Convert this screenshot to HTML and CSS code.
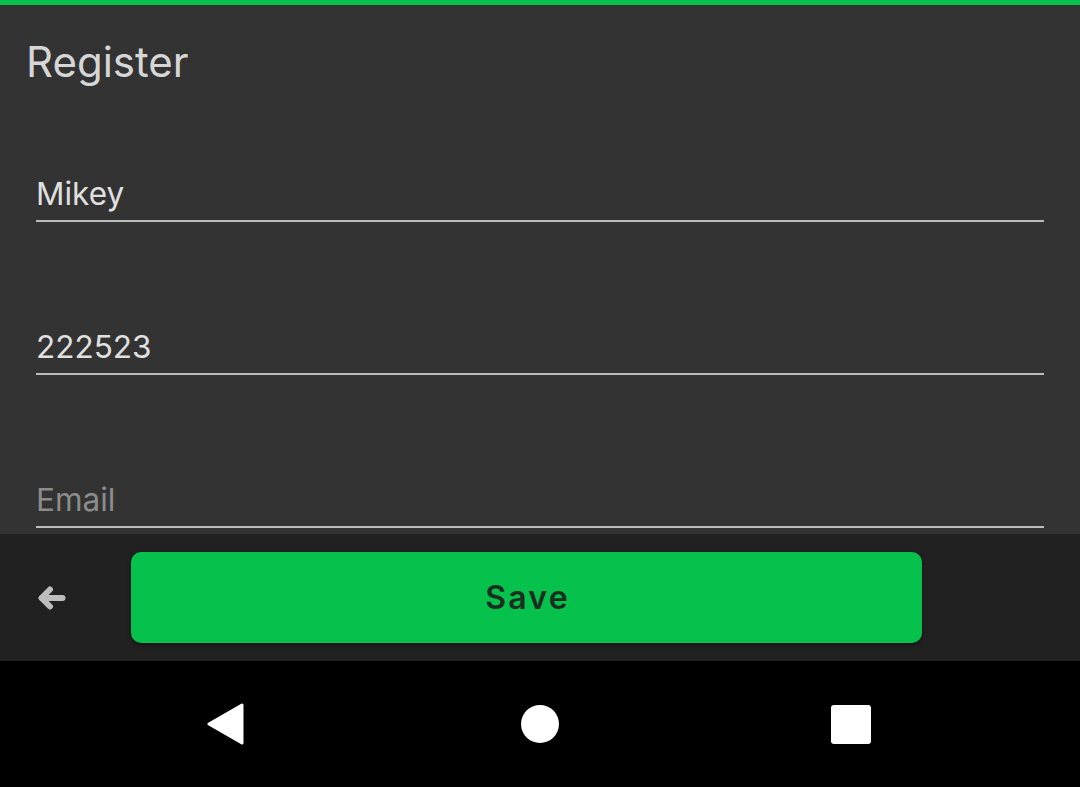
FILE: index.html
```html
<!DOCTYPE html>
<html lang="en">
<head>
<meta charset="utf-8">
<title>Register</title>
<link rel="stylesheet" href="styles.css">
</head>
<body>
<div class="app">
  <div class="topline"></div>
  <main class="content">
    <h1 class="title">Register</h1>
    <form class="form">
      <input class="field" type="text" value="Mikey">
      <input class="field" type="text" value="222523">
      <input class="field" type="email" placeholder="Email">
    </form>
  </main>
  <div class="actionbar">
    <button class="back" type="button" aria-label="Back">
      <svg width="28" height="26" viewBox="0 0 28 26">
        <polyline points="12,4.5 3.5,13 12,21.5" fill="none" stroke="#bdbdbd" stroke-width="6" stroke-linecap="round" stroke-linejoin="round"/>
        <line x1="4" y1="13" x2="24.5" y2="13" stroke="#bdbdbd" stroke-width="6" stroke-linecap="round"/>
      </svg>
    </button>
    <button class="save" type="button">Save</button>
  </div>
  <nav class="navbar">
    <svg class="nav-back" width="37" height="42" viewBox="0 0 37 42">
      <polygon points="35,2 35,40 2,21" fill="#fff" stroke="#fff" stroke-width="3" stroke-linejoin="round"/>
    </svg>
    <span class="nav-home"></span>
    <span class="nav-recent"></span>
  </nav>
</div>
</body>
</html>
```

FILE: styles.css
```css
* { box-sizing: border-box; }
html, body { margin: 0; padding: 0; }
body {
  width: 1080px;
  height: 787px;
  overflow: hidden;
  background: #000;
  font-family: Inter, Roboto, "Liberation Sans", sans-serif;
}
.app {
  display: flex;
  flex-direction: column;
  height: 787px;
}
.topline {
  height: 5px;
  background: #06c14c;
  flex: none;
}
.content {
  flex: 1;
  background: #333333;
  overflow: hidden;
  padding: 33px 36px 0 26px;
}
.title {
  margin: 0;
  font-size: 42px;
  line-height: 48px;
  font-weight: 400;
  color: #d6d6d6;
}
.form {
  display: flex;
  flex-direction: column;
  gap: 104px;
  margin-top: 87px;
  padding-left: 10px;
}
.field {
  display: block;
  width: 1008px;
  height: 49px;
  margin: 0;
  padding: 0 0 7px 0;
  border: none;
  border-bottom: 2px solid #bdbdbd;
  background: transparent;
  font-family: Inter, Roboto, "Liberation Sans", sans-serif;
  font-size: 31.5px;
  line-height: 40px;
  color: #e0e0e0;
  outline: none;
}
.field::placeholder { color: #8c8c8c; }
.actionbar {
  flex: none;
  height: 127px;
  background: #212121;
  display: flex;
  align-items: center;
  padding-left: 38px;
}
.back {
  width: 28px;
  height: 26px;
  padding: 0;
  border: none;
  background: none;
  display: flex;
}
.save {
  margin-left: 65px;
  width: 791px;
  height: 91px;
  border: none;
  border-radius: 10px;
  background: #06c14c;
  box-shadow: 0 2px 4px rgba(0,0,0,0.45);
  font-family: Inter, Roboto, "Liberation Sans", sans-serif;
  font-size: 32px;
  font-weight: 600;
  letter-spacing: 2.2px;
  color: #1c2e22;
  padding: 0 0 0 2px;
}
.navbar {
  flex: none;
  height: 126px;
  background: #000;
  display: flex;
  align-items: center;
  padding-left: 207px;
}
.nav-back { display: block; }
.nav-home {
  width: 38px;
  height: 38px;
  border-radius: 50%;
  background: #fff;
  margin-left: 277px;
}
.nav-recent {
  width: 40px;
  height: 39px;
  border-radius: 3px;
  background: #fff;
  margin-left: 272px;
}
```
